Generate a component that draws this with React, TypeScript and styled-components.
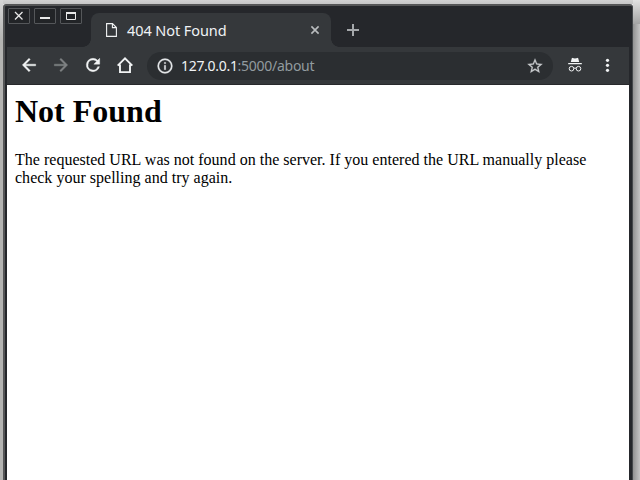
import React from "react";
import styled, { createGlobalStyle } from "styled-components";

const Global = createGlobalStyle`
  * { box-sizing: border-box; }
  html, body { margin: 0; padding: 0; height: 100%; overflow: hidden; }
`;

const Desktop = styled.div`
  width: 640px;
  height: 480px;
  overflow: hidden;
  padding: 4px 7px 0 3px;
  background:
    linear-gradient(90deg, #929292, #c4c4c4) right 0 top 24px / 7px 456px no-repeat,
    linear-gradient(#e2e2e2, #a4a4a4) right 0 top 0 / 7px 24px no-repeat,
    linear-gradient(#d6d6d6, #b4b4b2 40px) left top / 3px 480px no-repeat,
    linear-gradient(#d2d2d2, #c6c6c6) left top / 640px 4px no-repeat;
`;

const Frame = styled.div`
  width: 630px;
  height: 476px;
  display: flex;
  flex-direction: column;
  border: solid #555657;
  border-width: 2px 1px 0 2px;
  border-right-color: #45484b;
  border-radius: 3px 3px 0 0;
  background: #25272b;
  padding: 0 3px 0 2px;
`;

const TitleBar = styled.div`
  height: 41px;
  flex: none;
  display: flex;
  align-items: flex-start;
`;

const Controls = styled.div`
  display: flex;
  gap: 4px;
  width: 84px;
  padding: 2px 0 0 1px;
`;

const Control = styled.button`
  width: 22px;
  height: 16px;
  padding: 0;
  display: grid;
  place-items: center;
  border: 1px solid #55575a;
  border-radius: 1px;
  background: #222427;
  color: #e8e8e8;
  svg { display: block; }
`;

const Tab = styled.div`
  width: 240px;
  height: 34px;
  margin-top: 7px;
  padding: 0 11px 0 15px;
  display: flex;
  align-items: center;
  border-radius: 8px 8px 0 0;
  background: #35383b;
  position: relative;
  &::before, &::after {
    content: "";
    position: absolute;
    bottom: 0;
    width: 8px;
    height: 8px;
  }
  &::before { left: -8px; background: radial-gradient(circle at 0 0, transparent 7.5px, #35383b 8px); }
  &::after { right: -8px; background: radial-gradient(circle at 100% 0, transparent 7.5px, #35383b 8px); }
`;

const TabTitle = styled.span`
  flex: 1;
  margin-left: 10px;
  padding-bottom: 1px;
  white-space: nowrap;
  font: 14.5px/20px "Noto Sans", sans-serif;
  letter-spacing: -0.08px;
  color: #eff2f5;
`;

const NewTab = styled.div`
  padding: 18px 0 0 16px;
  svg { display: block; }
`;

const Toolbar = styled.div`
  height: 38px;
  flex: none;
  display: flex;
  align-items: center;
  background: #35383b;
  border-bottom: 1px solid #28292c;
  padding-left: 12px;
  svg { display: block; flex: none; }
`;

const NavIcons = styled.div`
  display: flex;
  gap: 12px;
  width: 128px;
  padding-bottom: 1px;
`;

const AddressBar = styled.div`
  width: 406px;
  height: 28px;
  border-radius: 14px;
  background: #2b2e31;
  display: flex;
  align-items: center;
  padding: 0 9px;
`;

const Url = styled.span`
  flex: 1;
  margin-left: 7px;
  white-space: nowrap;
  font: 14px/20px "Noto Sans", sans-serif;
  letter-spacing: -0.3px;
  color: #f0f2f4;
`;

const UrlRest = styled.span`
  color: #929b9f;
  letter-spacing: -0.27px;
`;

const Actions = styled.div`
  display: flex;
  gap: 12px;
  margin-left: 12px;
  padding-bottom: 1px;
`;

const Page = styled.main`
  flex: 1;
  background: #fff;
  color: #000;
  padding: 8px;
  font-family: "Liberation Serif", serif;
`;

const Heading = styled.h1`
  margin: 0;
  font-size: 32px;
  line-height: 36px;
`;

const Message = styled.p`
  margin: 22px 0 0;
  font-size: 16px;
  line-height: 18px;
  letter-spacing: 0.013px;
`;

type IconProps = { d: string; color?: string; size?: number; weight?: number };

const Icon = ({ d, color = "#f1f3f4", size = 20, weight = 0.5 }: IconProps) => (
  <svg width={size} height={size} viewBox="0 0 24 24" fill={color} stroke={color} strokeWidth={weight}>
    <path d={d} />
  </svg>
);

export default function App() {
  return (
    <>
      <Global />
      <Desktop>
        <Frame>
          <TitleBar>
            <Controls>
              <Control aria-label="Close">
                <svg width="10" height="10" fill="none" stroke="currentColor" strokeWidth="1.3">
                  <path d="M1 1l7.5 7.5M8.5 1L1 8.5" />
                </svg>
              </Control>
              <Control aria-label="Minimize">
                <svg width="10" height="10" fill="currentColor">
                  <path d="M0 6h10v2H0z" />
                </svg>
              </Control>
              <Control aria-label="Maximize">
                <svg width="10" height="8" fill="none" stroke="currentColor">
                  <path d="M.5 1v6.5h9V1M0 1h10" />
                  <path d="M0 1h10" strokeWidth="2" />
                </svg>
              </Control>
            </Controls>
            <Tab>
              <svg width="11" height="14" fill="none" stroke="#f1f3f4" strokeWidth="1.1">
                <path d="M.6.6h5.9l3.9 3.9v8.9H.6zM6.4.6v4h4" />
              </svg>
              <TabTitle>404 Not Found</TabTitle>
              <svg width="10" height="10" fill="none" stroke="#b9bcbe" strokeWidth="1.6">
                <path d="M1.4 1.4l7.2 7.2M8.6 1.4L1.4 8.6" />
              </svg>
            </Tab>
            <NewTab>
              <svg width="12" height="12" fill="#a5a8ab">
                <path d="M5 0h2v5h5v2H7v5H5V7H0V5h5z" />
              </svg>
            </NewTab>
          </TitleBar>
          <Toolbar>
            <NavIcons>
              <Icon d="M20 11H7.83l5.59-5.59L12 4l-8 8 8 8 1.41-1.41L7.83 13H20v-2z" />
              <Icon color="#7f8284" d="M12 4l-1.41 1.41L16.17 11H4v2h12.17l-5.58 5.59L12 20l8-8z" />
              <Icon d="M17.65 6.35A7.96 7.96 0 0 0 12 4a8 8 0 1 0 7.73 10h-2.08A6 6 0 1 1 12 6c1.66 0 3.14.69 4.22 1.78L13 11h7V4z" />
              <svg width="20" height="20" fill="none" stroke="#f1f3f4" strokeWidth="1.9">
                <path d="M2.7 10.6L10 3.3l7.3 7.3M5 9.5v7.6h10V9.5" />
              </svg>
            </NavIcons>
            <AddressBar>
              <Icon d="M11 7h2v2h-2zm0 4h2v6h-2zm1-9a10 10 0 1 0 0 20 10 10 0 0 0 0-20zm0 18a8 8 0 1 1 0-16 8 8 0 0 1 0 16z" color="#e2e5e7" size={18} weight={0.3} />
              <Url>
                127.0.0.1<UrlRest>:5000/about</UrlRest>
              </Url>
              <Icon size={18} color="#c7cacc" weight={0.3} d="M22 9.24l-7.19-.62L12 2 9.19 8.63 2 9.24l5.46 4.73L5.82 21 12 17.27 18.18 21l-1.63-7.03L22 9.24zM12 15.4l-3.76 2.27 1-4.28-3.32-2.88 4.38-.38L12 6.1l1.71 4.04 4.38.38-3.32 2.88 1 4.28L12 15.4z" />
            </AddressBar>
            <Actions>
              <svg width="20" height="20" fill="#f1f3f4">
                <path d="M6.8 3.2q.2-.5.8-.3l2.4.5 2.4-.5q.6-.2.8.3L14.2 7H5.8zM3.2 8h13.6v1.2H3.2z" />
                <g fill="none" stroke="#f1f3f4" strokeWidth="1">
                  <circle cx="6.5" cy="13.7" r="2.3" />
                  <circle cx="13.5" cy="13.7" r="2.3" />
                  <path d="M8.8 13.4q1.2-.8 2.4 0" />
                </g>
              </svg>
              <svg width="20" height="20" fill="#f1f3f4">
                <circle cx="10.5" cy="5.3" r="1.6" />
                <circle cx="10.5" cy="10.3" r="1.6" />
                <circle cx="10.5" cy="15.3" r="1.6" />
              </svg>
            </Actions>
          </Toolbar>
          <Page>
            <Heading>Not Found</Heading>
            <Message>
              The requested URL was not found on the server. If you entered the URL manually please check your spelling and try again.
            </Message>
          </Page>
        </Frame>
      </Desktop>
    </>
  );
}
